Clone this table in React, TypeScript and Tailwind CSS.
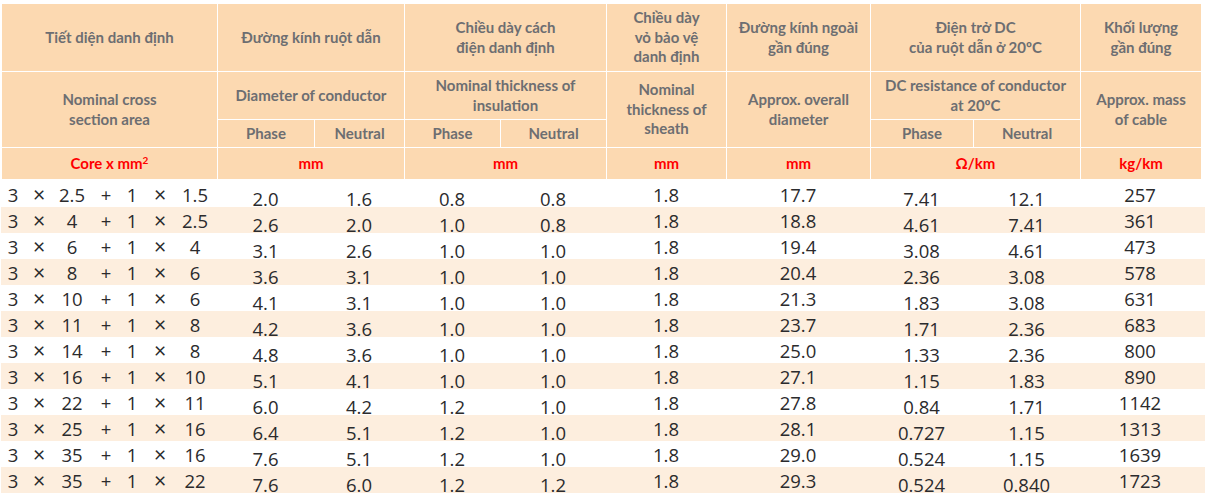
const rows: string[][] = [
  ["2.5", "1.5", "2.0", "1.6", "0.8", "0.8", "1.8", "17.7", "7.41", "12.1", "257"],
  ["4", "2.5", "2.6", "2.0", "1.0", "0.8", "1.8", "18.8", "4.61", "7.41", "361"],
  ["6", "4", "3.1", "2.6", "1.0", "1.0", "1.8", "19.4", "3.08", "4.61", "473"],
  ["8", "6", "3.6", "3.1", "1.0", "1.0", "1.8", "20.4", "2.36", "3.08", "578"],
  ["10", "6", "4.1", "3.1", "1.0", "1.0", "1.8", "21.3", "1.83", "3.08", "631"],
  ["11", "8", "4.2", "3.6", "1.0", "1.0", "1.8", "23.7", "1.71", "2.36", "683"],
  ["14", "8", "4.8", "3.6", "1.0", "1.0", "1.8", "25.0", "1.33", "2.36", "800"],
  ["16", "10", "5.1", "4.1", "1.0", "1.0", "1.8", "27.1", "1.15", "1.83", "890"],
  ["22", "11", "6.0", "4.2", "1.2", "1.0", "1.8", "27.8", "0.84", "1.71", "1142"],
  ["25", "16", "6.4", "5.1", "1.2", "1.0", "1.8", "28.1", "0.727", "1.15", "1313"],
  ["35", "16", "7.6", "5.1", "1.2", "1.0", "1.8", "29.0", "0.524", "1.15", "1639"],
  ["35", "22", "7.6", "6.0", "1.2", "1.2", "1.8", "29.3", "0.524", "0.840", "1723"],
]

// true = text sits lower in the row (as in the printed table)
const low = [true, true, true, true, false, false, true, true, false]

const H = ({ className = "", children }: { className?: string; children: React.ReactNode }) => (
  <div
    className={`flex items-center justify-center bg-[#fcd9b1] text-center text-[15px] leading-[19.5px] font-bold text-[#6d6e71] ${className}`}
  >
    <div>{children}</div>
  </div>
)

const Unit = ({ className = "", children }: { className?: string; children: React.ReactNode }) => (
  <H className={`text-[#ff0000] ${className}`}>{children}</H>
)

const Times = ({ className }: { className: string }) => (
  <span className={`text-center font-['Lato',sans-serif] text-[21px] ${className}`}>×</span>
)

export default function App() {
  return (
    <div className="h-[499px] w-[1205px] overflow-hidden bg-white font-['Lato','Open_Sans',sans-serif]">
      <div className="mt-[4px] ml-[2px] grid grid-cols-[215px_96px_89px_95px_105px_119px_143px_102px_106px_120px] grid-rows-[67px_47px_27px_31px] gap-px">
        <H>Tiết diện danh định</H>
        <H className="col-span-2">Đường kính ruột dẫn</H>
        <H className="col-span-2">
          Chiều dày cách
          <br />
          điện danh định
        </H>
        <H>
          Chiều dày
          <br />
          vỏ bảo vệ
          <br />
          danh định
        </H>
        <H>
          Đường kính ngoài
          <br />
          gần đúng
        </H>
        <H className="col-span-2">
          Điện trở DC
          <br />
          của ruột dẫn ở 20ºC
        </H>
        <H>
          Khối lượng
          <br />
          gần đúng
        </H>

        <H className="row-span-2">
          Nominal cross
          <br />
          section area
        </H>
        <H className="col-span-2">Diameter of conductor</H>
        <H className="col-span-2">
          Nominal thickness of
          <br />
          insulation
        </H>
        <H className="row-span-2">
          Nominal
          <br />
          thickness of
          <br />
          sheath
        </H>
        <H className="row-span-2">
          Approx. overall
          <br />
          diameter
        </H>
        <H className="col-span-2">
          DC resistance of conductor
          <br />
          at 20ºC
        </H>
        <H className="row-span-2">
          Approx. mass
          <br />
          of cable
        </H>

        <H>Phase</H>
        <H>Neutral</H>
        <H>Phase</H>
        <H>Neutral</H>
        <H>Phase</H>
        <H>Neutral</H>

        <Unit>
          Core x mm<sup className="text-[10px]">2</sup>
        </Unit>
        <Unit className="col-span-2">mm</Unit>
        <Unit className="col-span-2">mm</Unit>
        <Unit>mm</Unit>
        <Unit>mm</Unit>
        <Unit className="col-span-2">Ω/km</Unit>
        <Unit>kg/km</Unit>
      </div>

      <div className="mt-[2px] ml-[1px] font-['Open_Sans',sans-serif] text-[18.5px] leading-[26px] text-[#2b2b2d]">
        {rows.map((r, i) => (
          <div
            key={i}
            className={`grid h-[26px] grid-cols-[216px_97px_90px_96px_106px_120px_144px_103px_107px_120px] ${
              i % 2 === 1 ? "bg-[#fdeede]" : "bg-white"
            }`}
          >
            <div className="flex h-[26px]">
              <span className="w-[24px] pt-px text-center">3</span>
              <Times className="w-[28px]" />
              <span className="w-[38px] pt-px text-center">{r[0]}</span>
              <span className="w-[30px] pt-px text-center">+</span>
              <span className="w-[22px] pt-px text-center">1</span>
              <Times className="w-[34px]" />
              <span className="w-[36px] pt-px text-center">{r[1]}</span>
            </div>
            {r.slice(2).map((v, j) => (
              <div key={j} className={`text-center ${low[j] ? "pt-[5px]" : "pt-px"}`}>
                {v}
              </div>
            ))}
          </div>
        ))}
      </div>
    </div>
  )
}
